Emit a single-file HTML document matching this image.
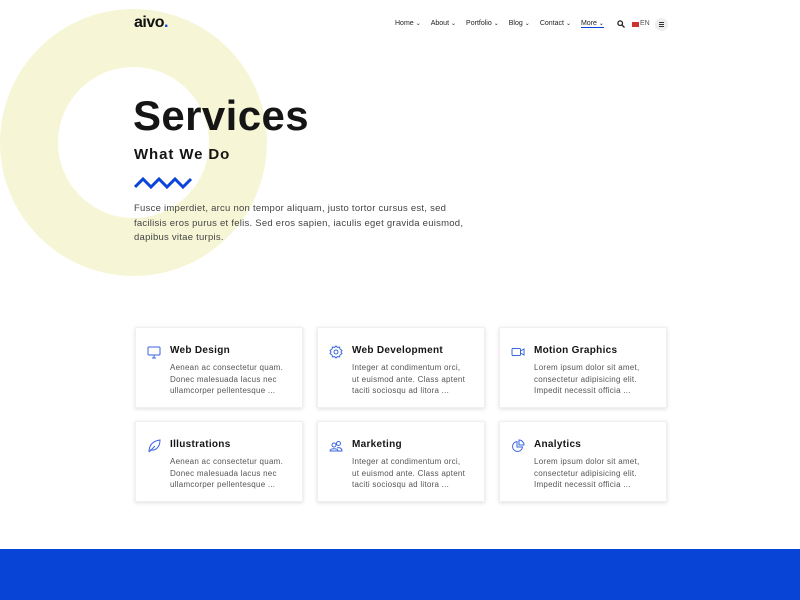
<!DOCTYPE html>
<html><head><meta charset="utf-8"><style>
*{margin:0;padding:0;box-sizing:border-box}
body{width:800px;height:600px;overflow:hidden;background:#fff;font-family:"Liberation Sans",sans-serif;position:relative;color:#222}
.ring{position:absolute;left:0;top:9px;width:267px;height:267px;border-radius:50%;border:58px solid #f6f6d6;left:0}
.logo{position:absolute;left:134px;top:14px;font-size:16px;font-weight:bold;color:#111;letter-spacing:-0.5px}
.logo span{color:#0a44d8}
nav{position:absolute;top:20px;left:395px;font-size:7px;color:#222;display:flex;gap:10px}
nav i{font-style:normal;font-size:6px;margin-left:2px}
h1{position:absolute;left:133px;top:92px;font-size:42px;font-weight:bold;color:#151515;letter-spacing:0.4px}
h2{position:absolute;left:134px;top:146px;font-size:15px;font-weight:bold;color:#151515;letter-spacing:0.9px}
.zig{position:absolute;left:134px;top:176px}
.lead{position:absolute;left:134px;top:202px;width:360px;font-size:9.5px;line-height:14.5px;color:#444;letter-spacing:0.25px;white-space:nowrap}
.card{position:absolute;width:168px;height:81px;background:#fff;box-shadow:0 1px 4px rgba(0,0,0,.13);border:1px solid #f0f0f0}
.card svg{position:absolute;left:11px;top:17px}
.card b{position:absolute;left:34px;top:17px;font-size:10px;color:#151515;letter-spacing:0.3px}
.card p{position:absolute;left:34px;top:34px;width:140px;font-size:8px;line-height:11.7px;color:#555;letter-spacing:0.25px;white-space:nowrap}
.foot{position:absolute;left:0;top:549px;width:800px;height:51px;background:#0844d6}
</style></head><body>
<div class="ring"></div>
<div class="logo">aivo<span>.</span></div>
<nav><span>Home<i>⌄</i></span><span>About<i>⌄</i></span><span>Portfolio<i>⌄</i></span><span>Blog<i>⌄</i></span><span>Contact<i>⌄</i></span><span style="border-bottom:1px solid #0a44d8">More<i>⌄</i></span></nav>
<svg style="position:absolute;left:617px;top:20px" width="8" height="8" viewBox="0 0 8 8"><circle cx="3.2" cy="3.2" r="2.3" fill="none" stroke="#222" stroke-width="1.3"/><path d="M5 5L7.5 7.5" stroke="#222" stroke-width="1.3"/></svg>
<div style="position:absolute;left:632px;top:22px;width:7px;height:5px;background:#c33"></div>
<div style="position:absolute;left:640px;top:20px;font-size:7px;color:#555">EN</div>
<div style="position:absolute;left:655px;top:18px;width:13px;height:13px;border-radius:50%;background:#eee"></div>
<div style="position:absolute;left:659px;top:22px;width:5px;height:5px;border-top:1px solid #333;border-bottom:1px solid #333"><div style="margin-top:1px;border-top:1px solid #333"></div></div>
<h1>Services</h1>
<h2>What We Do</h2>
<svg class="zig" width="58" height="14" viewBox="0 0 58 14"><path d="M1 11L9 3L17 11L25 3L33 11L41 3L49 11L57 3" fill="none" stroke="#0a44d8" stroke-width="3"/></svg>
<div class="lead">Fusce imperdiet, arcu non tempor aliquam, justo tortor cursus est, sed<br>facilisis eros purus et felis. Sed eros sapien, iaculis eget gravida euismod,<br>dapibus vitae turpis.</div>

<div class="card" style="left:135px;top:327px"><svg width="14" height="14" viewBox="0 0 14 14" fill="none" stroke="#3a66e0" stroke-width="1"><rect x="1" y="2" width="12" height="8" rx="1"/><path d="M5 13h4M7 10v3"/></svg><b>Web Design</b><p>Aenean ac consectetur quam.<br>Donec malesuada lacus nec<br>ullamcorper pellentesque ...</p></div>
<div class="card" style="left:317px;top:327px"><svg width="14" height="14" viewBox="0 0 14 14" fill="none" stroke="#3a66e0" stroke-width="1"><circle cx="7" cy="7" r="2"/><path d="M7 1l1.5 1.5 2-.5.5 2L13 5.5 12 7l1 1.5-2 1.5-.5 2-2-.5L7 13l-1.5-1.5-2 .5-.5-2L1 8.5 2 7 1 5.5 3 4l.5-2 2 .5z"/></svg><b>Web Development</b><p>Integer at condimentum orci,<br>ut euismod ante. Class aptent<br>taciti sociosqu ad litora ...</p></div>
<div class="card" style="left:499px;top:327px"><svg width="14" height="14" viewBox="0 0 14 14" fill="none" stroke="#3a66e0" stroke-width="1"><rect x="1" y="3.5" width="8.5" height="7" rx="1"/><path d="M9.5 6l3.5-2v6l-3.5-2"/></svg><b>Motion Graphics</b><p>Lorem ipsum dolor sit amet,<br>consectetur adipisicing elit.<br>Impedit necessit officia ...</p></div>
<div class="card" style="left:135px;top:421px"><svg width="14" height="14" viewBox="0 0 14 14" fill="none" stroke="#3a66e0" stroke-width="1"><path d="M2 13C2 6 6 2 13 1c0 7-4 11-10 10M2 13l6-6"/></svg><b>Illustrations</b><p>Aenean ac consectetur quam.<br>Donec malesuada lacus nec<br>ullamcorper pellentesque ...</p></div>
<div class="card" style="left:317px;top:421px"><svg width="14" height="14" viewBox="0 0 14 14" fill="none" stroke="#3a66e0" stroke-width="1"><circle cx="5" cy="6" r="2"/><circle cx="9.5" cy="4.5" r="2"/><path d="M1 12c0-3 8-3 8 0zM8 9c2-1 5 0 5 3H9"/></svg><b>Marketing</b><p>Integer at condimentum orci,<br>ut euismod ante. Class aptent<br>taciti sociosqu ad litora ...</p></div>
<div class="card" style="left:499px;top:421px"><svg width="14" height="14" viewBox="0 0 14 14" fill="none" stroke="#3a66e0" stroke-width="1"><path d="M6 2.5a5 5 0 1 0 5.5 5.5H6z"/><path d="M8 1v5h5a5 5 0 0 0-5-5z"/></svg><b>Analytics</b><p>Lorem ipsum dolor sit amet,<br>consectetur adipisicing elit.<br>Impedit necessit officia ...</p></div>
<div class="foot"></div>
</body></html>
